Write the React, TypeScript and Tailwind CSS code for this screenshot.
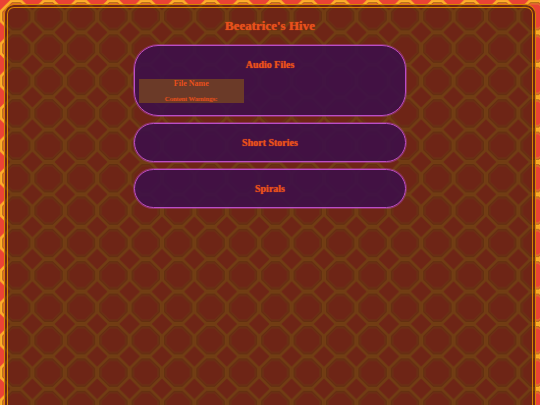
import type { ReactNode } from "react";

function Honeycomb() {
  return (
    <svg className="absolute inset-0 w-full h-full" aria-hidden="true">
      <defs>
        <pattern
          id="comb"
          width="32.4"
          height="32.4"
          patternUnits="userSpaceOnUse"
        >
          <rect width="33" height="33" fill="#ea4335" />
          <g fill="none">
            <path
              d="M11.2 1H21.2L31.4 11.2V21.2L21.2 31.4H11.2L1 21.2V11.2Z"
              stroke="#ffb02c"
              strokeWidth="2.6"
            />
            <path
              d="M11 0.2H21.4L32.2 11V21.4L21.4 32.2H11L0.2 21.4V11Z"
              stroke="#ec9a20"
              strokeWidth="0.5"
            />
            <path
              d="M12 2.6H20.4L29.8 12V20.4L20.4 29.8H12L2.6 20.4V12Z"
              stroke="#a87a10"
              strokeWidth="0.9"
            />
            <path
              d="M12.4 3.9H20L28.5 12.4V20L20 28.5H12.4L3.9 20V12.4Z"
              stroke="#d89028"
              strokeWidth="0.9"
            />
          </g>
        </pattern>
      </defs>
      <rect width="100%" height="100%" fill="url(#comb)" />
    </svg>
  );
}

function Section({ title, children }: { title: string; children?: ReactNode }) {
  return (
    <section className="w-[52%] rounded-[24px] border border-[#bb4cc6] bg-[#3d1048]/90 px-1 py-3 shadow-[0_0_0_1px_#bb4cc666]">
      <h2 className="text-center text-[10px] leading-[13px] font-bold text-shadow-[0_0_1px_#e8501c]">
        {title}
      </h2>
      {children}
    </section>
  );
}

export default function App() {
  return (
    <div className="relative min-h-screen flex font-['Liberation_Serif',serif] text-[#e8501c]">
      <Honeycomb />
      <main className="relative flex-1 flex flex-col items-center gap-[7px] mx-1 mt-1 rounded-t-[10px] border-4 border-b-0 border-double border-[#d98200] bg-[#4a1e0e]/78 pt-[6px]">
        <h1 className="text-[13px] leading-[24px] font-bold text-shadow-[0_0_1px_#e8501c]">
          Beeatrice's Hive
        </h1>
        <Section title="Audio Files">
          <div className="mt-2 w-[40%] bg-[#6b3a28] text-center">
            <h3 className="text-[8px] leading-[10px] font-bold">File Name</h3>
            <p className="mt-[6px] text-[7px] leading-[8px] text-shadow-[0_0_1px_#e8501c]">
              Content Warnings:
            </p>
          </div>
        </Section>
        <Section title="Short Stories" />
        <Section title="Spirals" />
      </main>
    </div>
  );
}
